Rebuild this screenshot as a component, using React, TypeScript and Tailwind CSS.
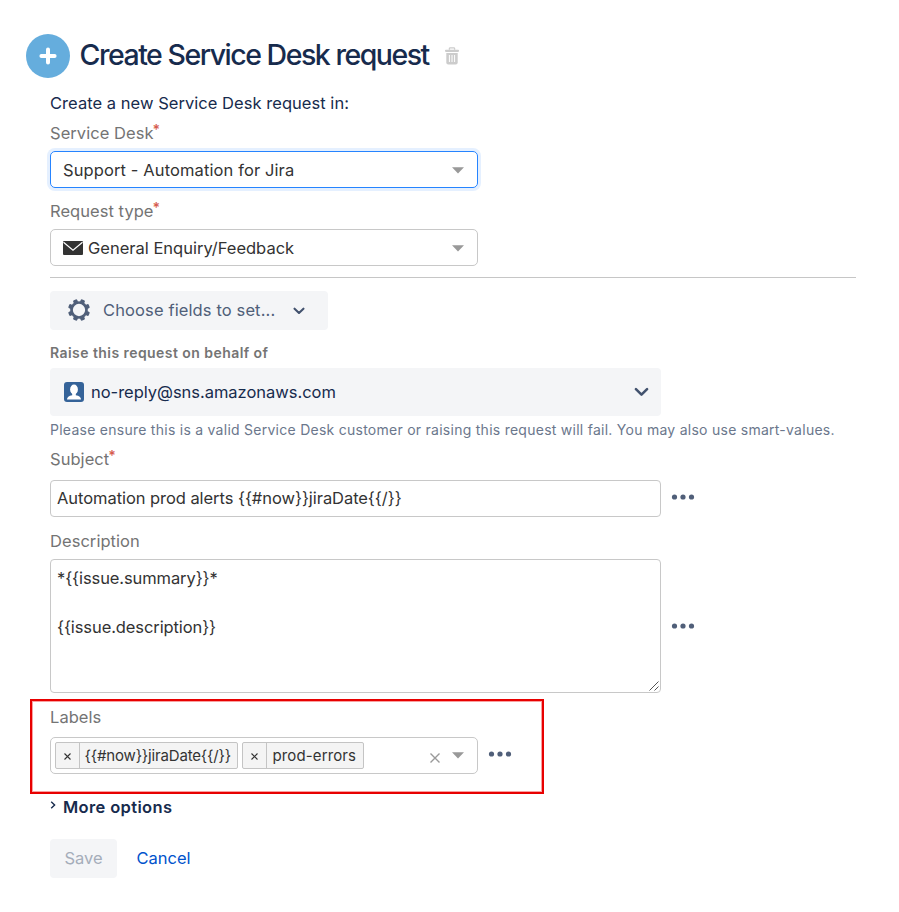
import {useState} from "react";
import type {ReactNode} from "react";

function Label({children, required}: {children: ReactNode; required?: boolean}) {
	return (
		<div className="flex h-6 items-center text-[16.5px] tracking-[0.05px] text-[#747474]">
			<span>{children}</span>
			{required && <span className="-mt-2 -ml-px text-[14px] font-semibold text-[#d65c50]">*</span>}
		</div>
	);
}

function Caret() {
	return (
		<svg width="12" height="7" viewBox="0 0 12 7" className="shrink-0">
			<path d="M0 0.3h12L6 6.5z" fill="#999" />
		</svg>
	);
}

function Dots() {
	return (
		<svg width="24" height="8" viewBox="0 0 24 8" fill="#505f79" className="-mt-[3px] shrink-0">
			<circle cx="3.5" cy="4" r="2.6" />
			<circle cx="12" cy="4" r="2.6" />
			<circle cx="20.5" cy="4" r="2.6" />
		</svg>
	);
}

function Chevron({size, stroke}: {size: number; stroke: string}) {
	return (
		<svg width={size} height={size * 0.65} viewBox="0 0 14 9" fill="none" className="shrink-0">
			<path d="M1.8 1.9 7 7l5.2-5.1" stroke={stroke} strokeWidth="2.4" strokeLinecap="round" strokeLinejoin="round" />
		</svg>
	);
}

function GearIcon() {
	return (
		<svg width="22" height="22" viewBox="0 0 22 22" className="-mt-0.5 shrink-0">
			<g fill="#505f79">
				{[0, 45, 90, 135, 180, 225, 270, 315].map((a) => (
					<rect key={a} x="8.8" y="0" width="4.4" height="5" rx="1.2" transform={`rotate(${a + 22.5} 11 11)`} />
				))}
			</g>
			<circle cx="11" cy="11" r="7.5" fill="#f4f5f7" stroke="#505f79" strokeWidth="2.7" />
		</svg>
	);
}

function Tag({children}: {children: ReactNode}) {
	return (
		<div className="flex h-[27px] items-stretch rounded-[2px] border border-[#c4c4c4] bg-[#f4f4f4] text-[15px] text-[#333]">
			<span className="flex w-[23.5px] items-center justify-center border-r border-[#c4c4c4]">
				<svg width="7" height="7" viewBox="0 0 7 7" stroke="#333" strokeWidth="1.1" className="mt-px">
					<path d="M.5.5l6 6M6.5.5l-6 6" />
				</svg>
			</span>
			{children}
		</div>
	);
}

function App() {
	const [subject, setSubject] = useState("Automation prod alerts {{#now}}jiraDate{{/}}");
	const [description, setDescription] = useState("*{{issue.summary}}*\n\n{{issue.description}}");

	return (
		<div className="h-[912px] w-[899px] overflow-hidden bg-white pt-[34px] font-['Inter',sans-serif] text-[#333]">
			<div className="flex h-11 items-center pl-[25.5px]">
				<div className="flex size-11 items-center justify-center rounded-full bg-[#65addd]">
					<svg width="18" height="18" viewBox="0 0 18 18" stroke="#fff" strokeWidth="4" strokeLinecap="round">
						<path d="M9 2.4v13.2M2.4 9h13.2" />
					</svg>
				</div>
				<h1 className="-mt-0.5 ml-2.5 w-[349px] text-[28.5px] font-medium tracking-[-1.48px] whitespace-nowrap text-[#172b4d]">
					Create Service Desk request
				</h1>
				<svg width="14" height="18" viewBox="0 0 14 18" className="ml-4">
					<path d="M4.4 2.8V1.6q0-.8.8-.8h3.6q.8 0 .8.8v1.2" fill="none" stroke="#ccc" strokeWidth="1.3" />
					<rect x="0" y="2.7" width="14" height="2.2" rx=".8" fill="#ccc" />
					<path d="M1.3 6h11.4v9.6q0 1.9-1.9 1.9H3.2q-1.9 0-1.9-1.9z" fill="#ccc" />
					<path d="M4.4 8v7M7 8v7M9.6 8v7" stroke="#fff" strokeWidth="1" />
				</svg>
			</div>

			<div className="pl-[50px]">
				<p className="mt-[13px] flex h-6 items-center text-[16.5px] tracking-[0.04px] text-[#172b4d]">
					Create a new Service Desk request in:
				</p>

				<div className="mt-1.5">
					<Label required>Service Desk</Label>
					<div className="mt-1.5 flex h-[37px] w-[428px] items-center justify-between rounded-[5px] border-[1.5px] border-[#2684ff] pt-px pr-[13px] pl-3 text-[16.5px] tracking-[0.11px] shadow-[0_0_0_3px_#e5f0ff]">
						<span>Support - Automation for Jira</span>
						<Caret />
					</div>
				</div>

				<div className="mt-[11px]">
					<Label required>Request type</Label>
					<div className="mt-1.5 flex h-[37px] w-[428px] items-center justify-between rounded-[5px] border border-[#c8c8c8] pt-px pr-[13px] pl-3 text-[16.5px]">
						<span className="flex items-center gap-[5px]">
							<svg width="20" height="14" viewBox="0 0 20 14">
								<rect width="20" height="14" rx="1" fill="#333" />
								<path d="M.5 1.2 10 9.2l9.5-8" fill="none" stroke="#fff" strokeWidth="1.2" />
							</svg>
							General Enquiry/Feedback
						</span>
						<Caret />
					</div>
				</div>

				<hr className="mt-[11px] w-[806px] border-t border-[#c6c6c6]" />

				<button className="mt-[13px] flex h-[39px] w-[278px] items-center rounded-[4px] bg-[#f4f5f7] pl-[18px] text-[16.5px] text-[#505f79]">
					<GearIcon />
					<span className="ml-[13px] w-[190px] text-left tracking-[0.12px]">Choose fields to set...</span>
					<Chevron size={12} stroke="#42526e" />
				</button>

				<p className="mt-2.5 flex h-6 items-center text-[14px] font-semibold tracking-[0.44px] text-[#747474]">
					Raise this request on behalf of
				</p>
				<div className="mt-1 flex h-12 w-[611px] items-center rounded-[4px] bg-[#f4f5f7] pr-3 pl-3.5 text-[16.5px] text-[#172b4d]">
					<svg width="20" height="20" viewBox="0 0 20 20">
						<rect width="20" height="20" rx="3" fill="#356399" />
						<ellipse cx="10" cy="7.5" rx="3.9" ry="5" fill="#fff" />
						<path d="M8.2 11h3.6v2.2q5.2.8 5.2 4.3H3q0-3.5 5.2-4.3z" fill="#fff" />
					</svg>
					<span className="ml-[7px] flex-1 tracking-[-0.03px]">no-reply@sns.amazonaws.com</span>
					<Chevron size={15} stroke="#42526e" />
				</div>
				<p className="mt-px flex h-6 items-center text-[14px] tracking-[0.26px] whitespace-nowrap text-[#6b778c]">
					Please ensure this is a valid Service Desk customer or raising this request will fail. You may also use
					smart-values.
				</p>

				<div className="mt-1.5">
					<Label required>Subject</Label>
					<div className="mt-[9px] flex items-center gap-2.5">
						<input
							className="h-[37px] w-[611px] rounded-[4px] border border-[#c8c8c8] px-1.5 pb-0.5 text-[16.5px] tracking-[-0.06px] outline-none"
							value={subject}
							onChange={(e) => setSubject(e.target.value)}
						/>
						<Dots />
					</div>
				</div>

				<div className="mt-3">
					<Label>Description</Label>
					<div className="mt-1.5 flex items-center gap-2.5">
						<div className="relative h-[134px] w-[611px]">
							<textarea
								className="block size-full resize-none rounded-[4px] border border-[#c8c8c8] px-1.5 py-1.5 text-[16.5px] leading-[24.5px] tracking-[-0.1px] outline-none"
								value={description}
								onChange={(e) => setDescription(e.target.value)}
							/>
							<svg width="10" height="10" viewBox="0 0 10 10" stroke="#555" className="absolute right-0.5 bottom-0.5">
								<path d="M.5 9.5l9-9M5.500 9.500l4-4" />
							</svg>
						</div>
						<div className="pt-[3px]">
							<Dots />
						</div>
					</div>
				</div>

				{/* highlighted field */}
				<div className="mt-1.5 -ml-5 h-[95px] w-[514px] border-2 border-[#e80000] pt-1 pl-[18px] shadow-[inset_0_0_0_1px_#f9a0a0]">
					<Label>Labels</Label>
					<div className="mt-2 flex items-center gap-2.5">
						<div className="flex h-[37px] w-[428px] items-center gap-1 rounded-[5px] border border-[#c8c8c8] pr-[13px] pl-1">
							<Tag>
								<span className="w-[157.5px] pt-0.5 pl-[5px] tracking-[-0.17px]">{"{{#now}}jiraDate{{/}}"}</span>
							</Tag>
							<Tag>
								<span className="w-[96.5px] pt-0.5 pl-1.5 tracking-[0.12px]">prod-errors</span>
							</Tag>
							<svg width="10" height="10" viewBox="0 0 10 10" stroke="#999" strokeWidth="1.4" className="mt-1 mr-2 ml-auto">
								<path d="M.5.5l9 9M9.5.5l-9 9" />
							</svg>
							<Caret />
						</div>
						<Dots />
					</div>
				</div>

				<div className="mt-px flex h-6 items-center text-[16.5px] font-semibold tracking-[0.36px] text-[#172b4d]">
					<svg width="6" height="8" viewBox="0 0 6 8" fill="none" className="-mt-1 mr-[7px]">
						<path d="M1.2.8 4.6 4 1.2 7.2" stroke="#172b4d" strokeWidth="1.4" />
					</svg>
					More options
				</div>

				<div className="mt-5 flex items-center text-[16.5px]">
					<button className="h-[39px] w-[67px] rounded-[4px] bg-[#f4f5f7] text-[#a5adba]" disabled>
						Save
					</button>
					<button className="ml-[19.5px] text-[#0052cc]">Cancel</button>
				</div>
			</div>
		</div>
	);
}

export default App;
